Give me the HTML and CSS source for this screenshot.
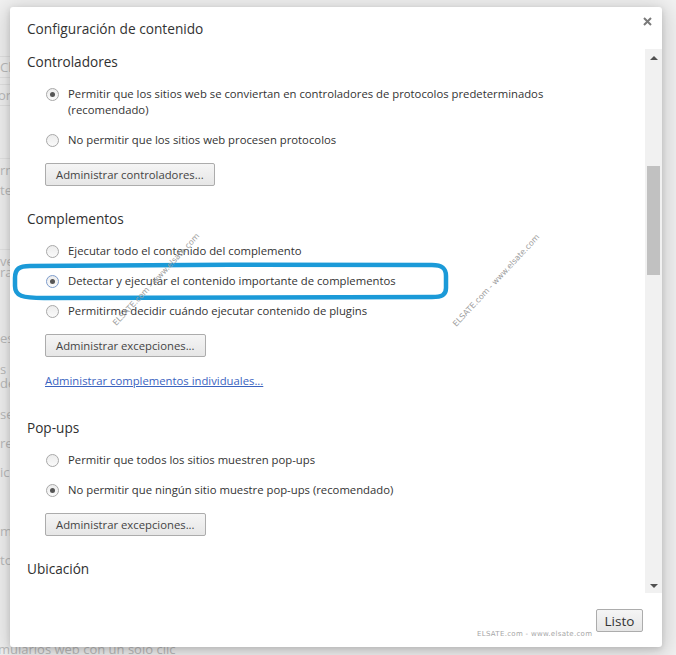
FILE: index.html
```html
<!DOCTYPE html>
<html lang="es">
<head>
    <meta charset="UTF-8">
    <title>Configuración de contenido</title>
    <link rel="stylesheet" href="styles.css">
</head>
<body>
    <!-- la pagina de configuracion que queda detras del dialogo -->
    <div class="page">
        <div class="bg-line boxed top-a">Chrome</div>
        <div class="bg-line boxed top-b">ortar marcadores</div>
        <div class="bg-line ruled top-c">rmularios</div>
        <div class="bg-line top-d">texto</div>
        <div class="bg-line ruled top-c">ver todo</div>
        <div class="bg-line top-e">rar contenido</div>
        <div class="bg-line top-c">es de contraseñas</div>
        <div class="bg-line top-f">s b</div>
        <div class="bg-line">de</div>
        <div class="bg-line top-f">se</div>
        <div class="bg-line top-g">re</div>
        <div class="bg-line top-g">ic</div>
        <div class="bg-line top-h">m</div>
        <div class="bg-line top-g">to</div>
        <div class="bg-line top-i">mularios web con un solo clic</div>
    </div>

    <div class="overlay">
        <div class="dialog">
            <div class="dialog-head">
                <h1>Configuración de contenido</h1>
                <span class="close">
                    <svg width="9" height="9" viewBox="0 0 9 9"><path d="M1 1L8 8M8 1L1 8" stroke="#7a7a7a" stroke-width="2"/></svg>
                </span>
            </div>

            <div class="dialog-body">
                <div class="content">
                    <section class="group">
                        <h3>Controladores</h3>
                        <div class="options">
                            <label class="option"><span class="radio checked"></span><span>Permitir que los sitios web se conviertan en controladores de protocolos predeterminados<br>(recomendado)</span></label>
                            <label class="option"><span class="radio"></span><span>No permitir que los sitios web procesen protocolos</span></label>
                        </div>
                        <button class="btn">Administrar controladores...</button>
                    </section>

                    <section class="group with-link">
                        <h3>Complementos</h3>
                        <div class="options">
                            <label class="option"><span class="radio"></span><span>Ejecutar todo el contenido del complemento</span></label>
                            <label class="option"><span class="radio checked focused"></span><span>Detectar y ejecutar el contenido importante de complementos</span></label>
                            <label class="option"><span class="radio"></span><span>Permitirme decidir cuándo ejecutar contenido de plugins</span></label>
                        </div>
                        <button class="btn">Administrar excepciones...</button>
                        <a class="link" href="#">Administrar complementos individuales...</a>
                    </section>

                    <section class="group">
                        <h3>Pop-ups</h3>
                        <div class="options">
                            <label class="option"><span class="radio"></span><span>Permitir que todos los sitios muestren pop-ups</span></label>
                            <label class="option"><span class="radio checked"></span><span>No permitir que ningún sitio muestre pop-ups (recomendado)</span></label>
                        </div>
                        <button class="btn">Administrar excepciones...</button>
                    </section>

                    <section class="group">
                        <h3>Ubicación</h3>
                        <div class="options tight">
                            <label class="option"><span class="radio"></span><span>Permitir que todos los sitios rastreen tu ubicación física</span></label>
                        </div>
                    </section>

                    <!-- marca azul a mano alzada -->
                    <svg class="marker" width="440" height="40" viewBox="0 0 440 40">
                        <path d="M18 4 C120 3 320 2 420 3 C431 3 434 7 434 14 L434 26 C434 33 430 35 420 35 L32 36 C10 36 3 34 3 24 L3 16 C3 7 7 4 18 4 Z" fill="none" stroke="#1b9ad8" stroke-width="4.5"/>
                    </svg>
                    <span class="wm wm-a">ELSATE.com - www.elsate.com</span>
                    <span class="wm wm-b">ELSATE.com - www.elsate.com</span>
                </div>

                <div class="scrollbar">
                    <span class="arrow up"></span>
                    <span class="thumb"></span>
                    <span class="arrow down"></span>
                </div>
            </div>

            <div class="dialog-foot">
                <span class="wm-foot">ELSATE.com - www.elsate.com</span>
                <button class="btn btn-done">Listo</button>
            </div>
        </div>
    </div>
</body>
</html>
```

FILE: styles.css
```css
* {
    padding: 0;
    margin: 0;
    box-sizing: border-box;
}
body {
    width: 676px;
    height: 655px;
    overflow: hidden;
    background-color: #f3f3f3;
    color: #303030;
    font-family: 'Open Sans', 'Noto Sans', sans-serif;
    font-size: 11.3px;
    position: relative;
}

/* pagina de fondo */
.page {
    width: 300px;
    color: #bdbdbd;
    font-size: 13px;
    line-height: 14px;
}
.bg-line {
    white-space: nowrap;
}
.boxed {
    border-top: 1px solid #e4e4e4;
    border-bottom: 1px solid #e4e4e4;
    padding: 3px 0;
}
.ruled {
    border-top: 1px solid #e6e6e6;
    padding-top: 4px;
}
.top-a { margin-top: 56px; }
.top-b { margin-top: 6px; margin-left: -2px; }
.top-c { margin-top: 52px; }
.top-d { margin-top: 6px; }
.top-e { margin-top: -3px; }
.top-f { margin-top: 17px; }
.top-g { margin-top: 15px; }
.top-h { margin-top: 45px; }
.top-i { margin-top: 75px; margin-left: -2px; }

/* dialogo */
.overlay {
    position: absolute;
    left: 10px;
    top: 7px;
}
.dialog {
    width: 652px;
    height: 640px;
    background: #fff;
    border-radius: 3px;
    box-shadow: 0 4px 23px 5px rgba(0, 0, 0, 0.16), 0 2px 6px rgba(0, 0, 0, 0.14);
    display: flex;
    flex-direction: column;
    overflow: hidden;
}
.dialog-head {
    height: 42px;
    padding: 12px 10px 0 17px;
    display: flex;
    justify-content: space-between;
    align-items: flex-start;
}
.dialog-head h1 {
    font-size: 13.7px;
    font-weight: normal;
    line-height: 20px;
    color: #333;
}
.close {
    margin-top: -2px;
    line-height: 0;
}

.dialog-body {
    height: 544px;
    display: flex;
}
.content {
    flex: 1;
    overflow: hidden;
    padding: 3px 0 0 17px;
    position: relative;
}
.group {
    margin-bottom: 23px;
}
.group.with-link {
    padding-bottom: 6px;
}
.group h3 {
    font-size: 13.6px;
    font-weight: normal;
    line-height: 20px;
    color: #303030;
}
.options {
    margin-top: 14px;
    padding-left: 19px;
    display: flex;
    flex-direction: column;
    gap: 14px;
}
.option {
    display: flex;
    align-items: flex-start;
    gap: 9px;
    line-height: 16px;
    color: #333;
}
.radio {
    flex: none;
    width: 13px;
    height: 13px;
    margin-top: 2px;
    border-radius: 50%;
    border: 1px solid #a8a8a8;
    background: linear-gradient(#ececec, #fafafa);
    position: relative;
}
.radio.checked::after {
    content: "";
    position: absolute;
    left: 3px;
    top: 3px;
    width: 5px;
    height: 5px;
    border-radius: 50%;
    background: #555;
}
.radio.focused {
    border-color: #7d9ccc;
}
.btn {
    display: block;
    margin: 15px 0 0 18px;
    height: 23px;
    padding: 0 10px;
    font-family: inherit;
    font-size: 11.3px;
    color: #444;
    background: linear-gradient(#f5f5f5, #e6e6e6);
    border: 1px solid #acacac;
    border-radius: 2px;
}
.link {
    display: block;
    margin: 16px 0 0 18px;
    line-height: 16px;
    color: #3a63bf;
    text-decoration: underline;
}
.options.tight {
    margin-top: 13px;
}

.marker {
    position: absolute;
    left: 2px;
    top: 213px;
}
.wm {
    position: absolute;
    font-family: 'DejaVu Sans', sans-serif;
    font-size: 8px;
    color: #a0a0a0;
    white-space: nowrap;
    transform: rotate(-47deg);
}
.wm-a {
    left: 85px;
    top: 226px;
}
.wm-b {
    left: 425px;
    top: 227px;
}

.scrollbar {
    width: 17px;
    background: #f1f1f1;
    position: relative;
}
.arrow {
    position: absolute;
    left: 5px;
    width: 0;
    height: 0;
    border-left: 4px solid transparent;
    border-right: 4px solid transparent;
}
.arrow.up {
    top: 7px;
    border-bottom: 4px solid #505050;
}
.arrow.down {
    bottom: 5px;
    border-top: 4px solid #505050;
}
.thumb {
    position: absolute;
    left: 2px;
    top: 117px;
    width: 13px;
    height: 109px;
    background: #c1c1c1;
}

.dialog-foot {
    height: 54px;
    padding: 16px 19px 0 0;
    display: flex;
    justify-content: flex-end;
    align-items: flex-start;
    position: relative;
}
.btn-done {
    margin: 0;
    width: 47px;
    padding: 0;
    font-size: 13.5px;
    color: #333;
}
.wm-foot {
    position: absolute;
    left: 467px;
    top: 37px;
    font-family: 'DejaVu Sans', sans-serif;
    font-size: 7px;
    letter-spacing: 0.3px;
    color: #a6a6a6;
}
```
